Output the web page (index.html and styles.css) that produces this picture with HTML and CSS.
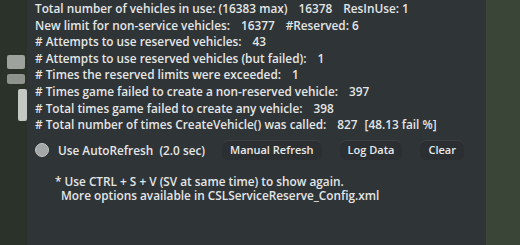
FILE: index.html
```html
<!DOCTYPE html>
<html lang="en">
<head>
<meta charset="UTF-8">
<title>Service Vehicle Reserve</title>
<link rel="stylesheet" href="styles.css">
</head>
<body>
<div class="scene">
    <div class="side side-left">
        <div class="game-icon icon-a"></div>
        <div class="game-icon icon-b"></div>
        <div class="game-icon icon-c"></div>
    </div>
    <div class="panel">
        <div class="stats">
            <div class="row">Total number of vehicles in use: (16383 max)<span class="val">16378</span><span class="val">ResInUse: 1</span></div>
            <div class="row">New limit for non-service vehicles:<span class="val">16377</span><span class="val">#Reserved: 6</span></div>
            <div class="row"># Attempts to use reserved vehicles:<span class="val">43</span></div>
            <div class="row"># Attempts to use reserved vehicles (but failed):<span class="val">1</span></div>
            <div class="row"># Times the reserved limits were exceeded:<span class="val">1</span></div>
            <div class="row"># Times game failed to create a non-reserved vehicle:<span class="val">397</span></div>
            <div class="row"># Total times game failed to create any vehicle:<span class="val">398</span></div>
            <div class="row"># Total number of times CreateVehicle() was called:<span class="val">827</span><span class="val small-gap">[48.13 fail %]</span></div>
        </div>
        <div class="controls">
            <label class="toggle">
                <span class="toggle-dot"></span>
                <span>Use AutoRefresh&nbsp; (2.0 sec)</span>
            </label>
            <div class="buttons">
                <button class="button">Manual Refresh</button>
                <button class="button">Log Data</button>
                <button class="button">Clear</button>
            </div>
        </div>
        <div class="notes">
            <div>* Use CTRL + S + V (SV at same time) to show again.</div>
            <div class="indent">More options available in CSLServiceReserve_Config.xml</div>
        </div>
    </div>
    <div class="side side-right"></div>
</div>
</body>
</html>
```

FILE: styles.css
```css
body {
    margin: 0;
    padding: 0;
    background-color: #2c342b;
    font-family: "Open Sans", "DejaVu Sans", sans-serif;
}

.scene {
    display: flex;
    width: 520px;
    height: 245px;
    overflow: hidden;
}

.side {
    flex: 1;
}

.side-left {
    flex: 0 0 27px;
    background-color: #2b3229;
    display: flex;
    flex-direction: column;
    align-items: flex-end;
    padding-top: 55px;
    gap: 5px;
}

.game-icon {
    background-color: #9da39c;
    border-radius: 2px;
}

.icon-a {
    width: 18px;
    height: 14px;
    margin-right: 2px;
}

.icon-b {
    width: 18px;
    height: 10px;
    margin-right: 2px;
    background-color: #8e938d;
}

.icon-c {
    width: 9px;
    height: 32px;
    background-color: #c4c8c3;
}

.side-right {
    background-color: #3a4437;
}

.panel {
    flex: 0 0 459px;
    background-color: #2f3437;
    color: #e4e6e6;
    padding: 0 0 0 8px;
    box-sizing: border-box;
    font-size: 11.8px;
    font-weight: 600;
}

.stats {
    line-height: 16.6px;
}

.row {
    white-space: nowrap;
}

.val {
    margin-left: 11px;
}

.small-gap {
    margin-left: 7px;
}

.controls {
    display: flex;
    align-items: center;
    margin-top: 7px;
}

.toggle {
    display: flex;
    align-items: center;
    gap: 9px;
    width: 187px;
}

.toggle-dot {
    width: 12px;
    height: 12px;
    border-radius: 50%;
    background-color: #a3a7a8;
    border: 1px solid #c3c6c6;
}

.buttons {
    display: flex;
    gap: 18px;
}

.button {
    font-family: inherit;
    font-size: 11px;
    font-weight: 600;
    color: #e8e9e9;
    background-color: #2b2f31;
    border: none;
    border-radius: 6px;
    padding: 2px 8px 3px;
    box-shadow: inset 0 1px 0 #3a3f42;
}

.notes {
    margin-top: 14px;
    padding-left: 20px;
    line-height: 14px;
}

.indent {
    padding-left: 6px;
}
```
